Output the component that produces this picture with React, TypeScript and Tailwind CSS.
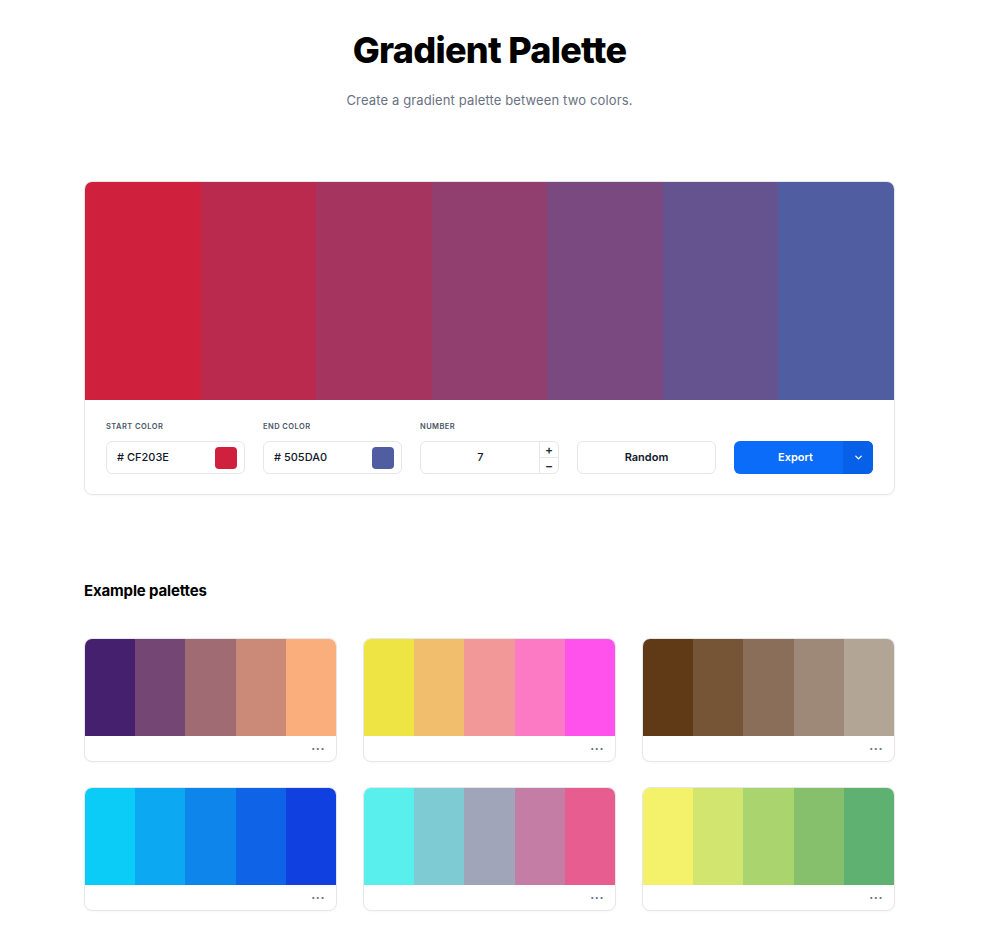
import React from "react";

const main = ["#CF203E", "#BA2A4E", "#A5345F", "#903F6F", "#7A497F", "#655390", "#505DA0"];

const examples: string[][] = [
  ["#45206F", "#734674", "#A06B73", "#CB8A77", "#FAAE7B"],
  ["#EEE544", "#F1BE6E", "#F39898", "#FC79C4", "#FF51EB"],
  ["#603916", "#765537", "#8B6E59", "#9E8979", "#B2A596"],
  ["#0BCBF7", "#0CA8F1", "#0D85EB", "#0F63E6", "#1040E0"],
  ["#58EFEC", "#7FCBD4", "#A1A5B9", "#C47EA6", "#E85D90"],
  ["#F4F26B", "#D1E56F", "#A9D46E", "#86C06C", "#5EB170"],
];

function ColorInput({ value, color }: { value: string; color: string }) {
  return (
    <div className="flex h-[33px] items-center justify-between rounded-md border border-gray-200 bg-white pl-[10px] pr-[7px]">
      <span className="text-[11px] font-medium text-gray-900"># {value}</span>
      <span className="h-[22px] w-[22px] rounded-[4px]" style={{ backgroundColor: color }} />
    </div>
  );
}

function Label({ children }: { children: React.ReactNode }) {
  return <div className="mb-[10px] h-[10px] pt-[1px] text-[7.5px] font-semibold uppercase leading-[10px] tracking-[0.06em] text-gray-600">{children}</div>;
}

export default function App() {
  return (
    <div className="min-h-[944px] w-full bg-white" style={{ fontFamily: "Inter, 'Noto Sans', sans-serif" }}>
      <div className="ml-[84px] w-[811px] pt-[28px]">
        <h1 className="text-center text-[36px] font-extrabold leading-[44px] tracking-[-0.02em] text-black">Gradient Palette</h1>
        <p className="mt-[19px] text-center text-[13px] leading-[18px] tracking-[0.01em] text-gray-500">Create a gradient palette between two colors.</p>

        <div className="mt-[72px] overflow-hidden rounded-lg border border-gray-200 shadow-[0_1px_2px_rgba(0,0,0,0.03)]">
          <div className="flex h-[218px]">
            {main.map((c) => (
              <div key={c} className="flex-1" style={{ backgroundColor: c }} />
            ))}
          </div>
          <div className="grid grid-cols-5 gap-[18px] px-[21px] pb-[20px] pt-[21px]">
            <div>
              <Label>Start color</Label>
              <ColorInput value="CF203E" color="#CF203E" />
            </div>
            <div>
              <Label>End color</Label>
              <ColorInput value="505DA0" color="#505DA0" />
            </div>
            <div>
              <Label>Number</Label>
              <div className="flex h-[33px] overflow-hidden rounded-md border border-gray-200 bg-white">
                <div className="flex flex-1 items-center justify-center pl-[1px] text-[11px] font-medium text-gray-900">7</div>
                <div className="flex w-[19px] flex-col border-l border-gray-200">
                  <div className="flex flex-1 items-center justify-center border-b border-gray-200 text-[12px] font-semibold leading-none text-gray-800">+</div>
                  <div className="flex flex-1 items-center justify-center text-[12px] font-semibold leading-none text-gray-800">−</div>
                </div>
              </div>
            </div>
            <div>
              <div className="mb-[10px] h-[10px]" />
              <button className="flex h-[33px] w-full items-center justify-center rounded-md border border-gray-200 bg-white text-[11px] font-semibold text-gray-900">Random</button>
            </div>
            <div>
              <div className="mb-[10px] h-[10px]" />
              <div className="flex h-[33px] w-full overflow-hidden rounded-md bg-[#0A6CF8] text-white">
                <div className="flex flex-1 items-center justify-center pl-[14px] text-[11px] font-semibold">Export</div>
                <div className="flex w-[30px] items-center justify-center bg-[#0760E8]">
                  <svg width="11" height="11" viewBox="0 0 24 24" fill="none" stroke="white" strokeWidth="3" strokeLinecap="round" strokeLinejoin="round">
                    <path d="M6 9l6 6 6-6" />
                  </svg>
                </div>
              </div>
            </div>
          </div>
        </div>

        <h2 className="mt-[86px] text-[15px] font-bold leading-[20px] tracking-[-0.01em] text-black">Example palettes</h2>

        <div className="mt-[37px] grid grid-cols-3 gap-x-[26px] gap-y-[25px]">
          {examples.map((p, i) => (
            <div key={i} className="overflow-hidden rounded-lg border border-gray-200 bg-white shadow-[0_1px_2px_rgba(0,0,0,0.03)]">
              <div className="flex h-[97px]">
                {p.map((c) => (
                  <div key={c} className="flex-1" style={{ backgroundColor: c }} />
                ))}
              </div>
              <div className="flex h-[25px] items-center justify-end pr-[11px]">
                <span className="text-[12px] font-bold leading-none tracking-[0.05em] text-gray-500">···</span>
              </div>
            </div>
          ))}
        </div>
      </div>
    </div>
  );
}
